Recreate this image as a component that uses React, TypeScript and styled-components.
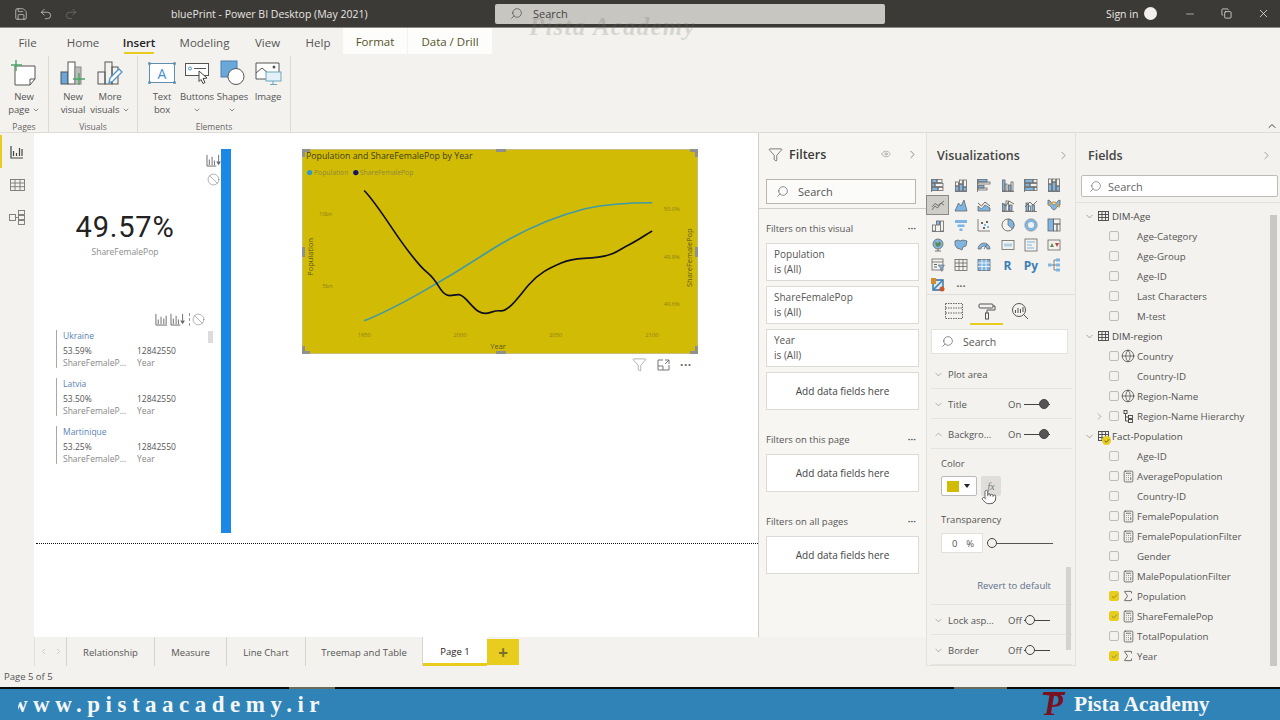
import React from 'react';
import styled, { createGlobalStyle } from 'styled-components';
import {
  Calculator,
  ChevronDown,
  ChevronLeft,
  ChevronRight,
  ChevronUp,
  Copy,
  Eye,
  Filter,
  Globe,
  Minus,
  Pointer,
  Redo2,
  Save,
  Search,
  Sigma,
  Undo2,
  X,
  Ban,
  Check,
} from 'lucide-react';

const INK = '#666';
const BLUE = '#7fb5e2';

const GlobalStyle = createGlobalStyle`
  html, body { margin: 0; padding: 0; background: #f3f2ee; }
  * { box-sizing: border-box; }
  body { font-family: "Open Sans", "Liberation Sans", sans-serif; color: #444; }
`;

const Solid = (x: number, y: number, w: number, h: number) => (
  <rect x={x} y={y} width={w} height={h} fill={BLUE} stroke={INK} strokeWidth={0.8} />
);
const Hollow = (x: number, y: number, w: number, h: number) => (
  <rect x={x} y={y} width={w} height={h} fill="none" stroke={INK} strokeWidth={0.8} />
);
const Base = <path d="M1 13.5H13" stroke={INK} strokeWidth={0.8} fill="none" />;
const Side = <path d="M.5 1V14" stroke={INK} strokeWidth={0.8} fill="none" />;

const vizIcons: React.ReactNode[] = [
  <>{Side}{Solid(1, 1.5, 5, 3)}{Hollow(6, 1.5, 5, 3)}{Solid(1, 5.5, 3, 3)}{Hollow(4, 5.5, 8, 3)}{Solid(1, 9.5, 6, 3)}{Hollow(7, 9.5, 5, 3)}</>,
  <>{Base}{Solid(1.5, 8, 3, 5)}{Hollow(1.5, 4, 3, 4)}{Solid(5.5, 6, 3, 7)}{Hollow(5.5, 2, 3, 4)}{Solid(9.5, 9, 3, 4)}{Hollow(9.5, 2, 3, 7)}</>,
  <>{Side}{Solid(1, 1.5, 9, 2.5)}{Hollow(1, 4, 12, 2)}{Solid(1, 7.5, 6, 2.5)}{Hollow(1, 10, 9, 2)}</>,
  <>{Base}{Solid(1.5, 2, 2.5, 11)}{Hollow(4, 6, 2, 7)}{Solid(7.5, 7, 2.5, 6)}{Hollow(10, 4, 2, 9)}</>,
  <>{Side}{Solid(1, 1.5, 8, 3)}{Hollow(9, 1.5, 4, 3)}{Solid(1, 5.5, 5, 3)}{Hollow(6, 5.5, 7, 3)}{Solid(1, 9.5, 9, 3)}{Hollow(10, 9.5, 3, 3)}</>,
  <>{Base}{Solid(1.5, 6, 3, 7)}{Hollow(1.5, 1, 3, 5)}{Solid(5.5, 4, 3, 9)}{Hollow(5.5, 1, 3, 3)}{Solid(9.5, 8, 3, 5)}{Hollow(9.5, 1, 3, 7)}</>,
  <path d="M1 12 4 8l2.5 2L10 5l3 2M1 9 4 5.5l3 2L13 3" fill="none" stroke={INK} strokeWidth={0.9} />,
  <><path d="M1 13 4.5 5 7 8l3-6 3 11Z" fill={BLUE} stroke={INK} strokeWidth={0.8} /></>,
  <><path d="M1 5l3.5 3L8 4l5 4" fill="none" stroke={INK} strokeWidth={1} /><path d="M1 8l3.5 3L8 7l5 3v3H1Z" fill={BLUE} stroke={INK} strokeWidth={0.8} /></>,
  <>{Base}{Solid(1.5, 6, 2.5, 7)}{Hollow(5, 3, 2.5, 10)}{Solid(8.5, 7, 2.5, 6)}<path d="M1 5l4 3 3-5 5 3" fill="none" stroke={INK} strokeWidth={0.9} /></>,
  <>{Base}{Solid(2, 5, 2.5, 8)}{Hollow(4.5, 8, 2, 5)}{Solid(8, 7, 2.5, 6)}<path d="M1 9l5-5 3 3 4-4" fill="none" stroke={INK} strokeWidth={0.9} /></>,
  <><path d="M1 2c3 0 4 5 6 5s3-5 6-5v5c-3 0-4 5-6 5s-3-5-6-5Z" fill={BLUE} stroke={INK} strokeWidth={0.8} /><path d="M1 7c3 0 4-3 6-3s3 4 6 5" fill="none" stroke="#c9a14a" strokeWidth={1.4} /></>,
  <>{Base}{Hollow(1.5, 7, 3, 6)}{Solid(5.5, 3, 3, 4)}{Hollow(9.5, 3, 3, 10)}</>,
  <path d="M1 2h12v3H1ZM3.5 6.5h7V9h-7ZM5.5 10.5h3V13h-3Z" fill={BLUE} stroke="none" />,
  <><path d="M1 1v12h12" fill="none" stroke={INK} strokeWidth={0.8} /><g fill={INK}><rect x="4" y="4" width="2" height="2" /><rect x="9" y="3" width="2" height="2" /><rect x="6" y="9" width="2" height="2" /></g><g fill={BLUE}><rect x="7" y="6" width="2" height="2" /><rect x="10" y="8" width="2" height="2" /></g></>,
  <><circle cx="7" cy="7" r="6" fill="none" stroke={INK} strokeWidth={0.9} /><path d="M7 7V1a6 6 0 0 1 4.5 10Z" fill={BLUE} stroke={INK} strokeWidth={0.7} /></>,
  <><circle cx="7" cy="7" r="4.5" fill="none" stroke={BLUE} strokeWidth={3} /><circle cx="7" cy="7" r="6.2" fill="none" stroke={INK} strokeWidth={0.5} /></>,
  <>{Solid(1, 1, 5.5, 12)}{Hollow(6.5, 1, 6.5, 5)}{Hollow(6.5, 6, 3.5, 7)}{Hollow(10, 6, 3, 7)}</>,
  <><circle cx="7" cy="6" r="5" fill={BLUE} stroke={INK} strokeWidth={0.8} /><path d="M4 4l3 1 2-2 1 4-3 2-2-1Z" fill="#5d8a4e" /><path d="M4 13h6M7 11v2" stroke={INK} strokeWidth={0.9} /></>,
  <path d="M1 3l3-1 2 1 3-1 4 1-1 5-3 1-1 3-2-1-3-1-2-3Z" fill={BLUE} stroke={INK} strokeWidth={0.8} />,
  <><path d="M1 11a6 6 0 0 1 12 0h-3a3 3 0 0 0-6 0Z" fill={BLUE} stroke={INK} strokeWidth={0.7} /><path d="M7 11l3-5" stroke={INK} strokeWidth={0.9} /></>,
  <>{Hollow(1, 2.5, 12, 9)}<path d="M3 5.5h8v3H3Z" fill={BLUE} opacity={0.6} /></>,
  <>{Hollow(1, 1, 12, 12)}<path d="M3 4h8M3 7h5M3 10h7" stroke={BLUE} strokeWidth={1.1} /></>,
  <>{Hollow(1, 2, 12, 10)}<path d="M3 9l2-4 2 4Z" fill="#5d8a4e" /><path d="M8 5h4l-2 4Z" fill="#b8433c" /></>,
  <>{Hollow(1, 1, 11, 11)}<path d="M1 4h11" stroke={INK} strokeWidth={0.8} /><path d="M3 6.5h3M3 9h3" stroke={INK} /><path d="M7 7h6.5l-2.5 3v3.5L9.5 12v-2Z" fill={BLUE} stroke={INK} strokeWidth={0.6} /></>,
  <>{Hollow(1, 1.5, 12, 11)}<path d="M1 5h12M1 8.5h12M5 1.5v11M9 1.5v11" stroke={INK} strokeWidth={0.8} /></>,
  <>{Solid(1, 1.5, 12, 11)}<path d="M1 5h12M1 8.5h12M5 1.5v11M9 1.5v11" stroke="#fff" strokeWidth={0.8} /></>,
  'R',
  'Py',
  <><path d="M4 7h3M7 2v10M7 2h2M7 7h2M7 12h2" stroke={INK} strokeWidth={0.8} fill="none" /><path d="M1 5.5h3.5v3H1ZM9 .5h4v3H9ZM9 5.5h4v3H9ZM9 10.5h4v3H9Z" fill={BLUE} /></>,
  <><path d="M2 2h10v10H2Z" fill="#dbe7f0" stroke="#2f6f9f" strokeWidth={1.4} /><path d="M3 11 11 3" stroke="#3a7fb5" strokeWidth={1.6} /><rect x="0" y="0" width="5" height="6" fill="#d68b2d" /><circle cx="11" cy="11" r="2.5" fill="#c9562d" /></>,
];

const PATH_BLUE = 'M205 543C290 510 440 425 570 340C680 268 780 228 870 205C950 188 1020 187 1072 187';
const PATH_DARK =
  'M205 150C230 175 260 220 290 265S350 350 375 378S405 398 430 440S470 462 490 464S525 500 550 515S590 510 615 513S670 470 700 435S760 385 800 368S860 358 910 351S970 330 1000 315S1050 285 1072 272';

const SearchIcon = () => (
  <FlippedIcon>
    <Search size={13} strokeWidth={1.2} />
  </FlippedIcon>
);

const CanvasGlyphs = {
  bars: (
    <svg width="13" height="13" viewBox="0 0 14 14" fill="none" stroke="#666" strokeWidth="1">
      <path d="M1 1v12h12M3.5 12V7M6.5 12V4M9.5 12V6M12 12V3" />
    </svg>
  ),
  drill: (
    <svg width="15" height="13" viewBox="0 0 16 14" fill="none" stroke="#666" strokeWidth="1">
      <path d="M1 1v12h10M3.5 12V6M6.5 12V3M9 12V7" />
      <path d="M11 8h5l-2.5 4Z" fill="#666" stroke="none" />
      <path d="M13.5 1v7" />
    </svg>
  ),
};

const HierarchyGlyph = () => (
  <svg width="11" height="13" viewBox="0 0 11 13" fill="none" stroke="#444" strokeWidth="0.9">
    <rect x="1" y=".5" width="3" height="3" />
    <path d="M2.5 3.5V11M2.5 7h3M2.5 11h3" />
    <rect x="5.5" y="5.5" width="4" height="3" />
    <rect x="5.5" y="9.5" width="4" height="3" />
  </svg>
);

type FieldKind = 'none' | 'globe' | 'calc' | 'sigma' | 'tree';
const fieldSections: { name: string; badge?: boolean; fields: [string, FieldKind, boolean?][] }[] = [
  { name: 'DIM-Age', fields: [['Age-Category', 'none'], ['Age-Group', 'none'], ['Age-ID', 'none'], ['Last Characters', 'none'], ['M-test', 'none']] },
  { name: 'DIM-region', fields: [['Country', 'globe'], ['Country-ID', 'none'], ['Region-Name', 'globe'], ['Region-Name Hierarchy', 'tree']] },
  {
    name: 'Fact-Population',
    badge: true,
    fields: [
      ['Age-ID', 'none'],
      ['AveragePopulation', 'calc'],
      ['Country-ID', 'none'],
      ['FemalePopulation', 'calc'],
      ['FemalePopulationFilter', 'calc'],
      ['Gender', 'none'],
      ['MalePopulationFilter', 'calc'],
      ['Population', 'sigma', true],
      ['ShareFemalePop', 'calc', true],
      ['TotalPopulation', 'calc'],
      ['Year', 'sigma', true],
    ],
  },
];

const fieldIcon = (kind: FieldKind) => {
  if (kind === 'globe') return <Globe size={14} strokeWidth={1.1} color="#333" />;
  if (kind === 'calc') return <Calculator size={13} strokeWidth={1.3} color="#444" />;
  if (kind === 'sigma') return <Sigma size={14} strokeWidth={1.2} color="#333" />;
  if (kind === 'tree') return <HierarchyGlyph />;
  return null;
};

const TableGlyph = () => (
  <svg width="11" height="10" viewBox="0 0 11 10" fill="none" stroke="#444" strokeWidth="0.9">
    <rect x=".5" y=".5" width="10" height="9" />
    <path d="M.5 3.5h10M.5 6.5h10M4 .5v9M7.5 .5v9" />
  </svg>
);

const Toggle = ({ on }: { on: boolean }) => (
  <ToggleWrap>
    <ToggleLabel>{on ? 'On' : 'Off'}</ToggleLabel>
    <ToggleTrack>
      <ToggleKnob $on={on} />
    </ToggleTrack>
  </ToggleWrap>
);

const listItems = [
  ['Ukraine', '53.59%'],
  ['Latvia', '53.50%'],
  ['Martinique', '53.25%'],
];

const App = () => (
  <>
    <GlobalStyle />
    <Page>
      <TitleBar>
        <QuickIcons>
          <Save size={14} strokeWidth={1.2} color="#ddd" />
          <Undo2 size={14} strokeWidth={1.2} color="#ddd" />
          <Redo2 size={14} strokeWidth={1.2} color="#777" />
        </QuickIcons>
        <WindowTitle>bluePrint - Power BI Desktop (May 2021)</WindowTitle>
        <TopSearch>
          <SearchIcon />
          <span>Search</span>
        </TopSearch>
        <SignIn>Sign in</SignIn>
        <Avatar />
        <WindowButtons>
          <Minus size={12} strokeWidth={1.2} />
          <Copy size={11} strokeWidth={1.6} />
          <X size={13} strokeWidth={1.4} />
        </WindowButtons>
      </TitleBar>
      <Watermark>Pista Academy</Watermark>

      <TabBar>
        <MenuTab $w={55}>File</MenuTab>
        <MenuTab $w={56}>Home</MenuTab>
        <MenuTab $w={56} $active>Insert</MenuTab>
        <MenuTab $w={75}>Modeling</MenuTab>
        <MenuTab $w={51}>View</MenuTab>
        <MenuTab $w={50}>Help</MenuTab>
        <ContextTab $w={64}>Format</ContextTab>
        <ContextTab $w={84}>Data / Drill</ContextTab>
      </TabBar>

      <Ribbon>
        <RibbonGroup $w={49}>
          <RibbonButtons $pad={0}>
            <RibbonButton $w={48}>
              <svg width="26" height="26" viewBox="0 0 26 26" fill="none">
                <path d="M4 6h20v13l-5 6H4Z" stroke="#555" fill="#fff" />
                <path d="M24 19h-5v6" stroke="#555" />
                <path d="M5 0v11M0 5h11" stroke="#4aa564" strokeWidth="1.4" />
              </svg>
              <ButtonLabel>New<br />page <ChevronDown size={8} /></ButtonLabel>
            </RibbonButton>
          </RibbonButtons>
          <GroupName>Pages</GroupName>
        </RibbonGroup>
        <RibbonGroup $w={89}>
          <RibbonButtons $pad={5.5}>
            <RibbonButton $w={37}>
              <svg width="26" height="26" viewBox="0 0 26 26" fill="none">
                <rect x="1" y="12" width="7" height="12" fill="#6aa8dc" stroke="#555" />
                <rect x="8" y="2" width="7" height="22" fill="#fff" stroke="#555" />
                <rect x="15" y="7" width="6" height="17" fill="#bbb" stroke="#888" />
                <path d="M19 13v12M13 19h12" stroke="#4aa564" strokeWidth="1.4" />
              </svg>
              <ButtonLabel>New<br />visual</ButtonLabel>
            </RibbonButton>
            <RibbonButton $w={37}>
              <svg width="26" height="26" viewBox="0 0 26 26" fill="none">
                <rect x="1" y="12" width="7" height="12" stroke="#555" />
                <rect x="8" y="2" width="7" height="22" stroke="#555" />
                <rect x="15" y="7" width="6" height="17" stroke="#555" />
                <path d="M12 23l1-5L22 9l3 3-9 9Z" fill="#fff" stroke="#4d93c9" strokeWidth="1.3" />
              </svg>
              <ButtonLabel>More<br />visuals <ChevronDown size={8} /></ButtonLabel>
            </RibbonButton>
          </RibbonButtons>
          <GroupName>Visuals</GroupName>
        </RibbonGroup>
        <RibbonGroup $w={153}>
          <RibbonButtons $pad={6.5}>
            <RibbonButton $w={35}>
              <svg width="28" height="26" viewBox="0 0 28 26" fill="none">
                <rect x="1.5" y="3.5" width="25" height="19" fill="#fff" stroke="#5f8fae" />
                <g fill="#5f8fae">
                  <circle cx="1.5" cy="3.5" r="1.5" /><circle cx="26.5" cy="3.5" r="1.5" />
                  <circle cx="1.5" cy="22.5" r="1.5" /><circle cx="26.5" cy="22.5" r="1.5" />
                </g>
                <text x="14" y="19" fontSize="14" textAnchor="middle" fill="#3f8fd2" fontFamily="Open Sans">A</text>
              </svg>
              <ButtonLabel>Text<br />box</ButtonLabel>
            </RibbonButton>
            <RibbonButton $w={35}>
              <svg width="26" height="26" viewBox="0 0 26 26" fill="none">
                <rect x="1.5" y="3.5" width="23" height="12" fill="#fff" stroke="#555" />
                <circle cx="6" cy="8.5" r="1.5" stroke="#4d93c9" />
                <path d="M10 8.5h12" stroke="#555" />
                <path d="M15 11l8 7-4 .5 2 4-2 1-2-4-2 2Z" fill="#fff" stroke="#444" />
              </svg>
              <ButtonLabel>Buttons<br /><ChevronDown size={8} /></ButtonLabel>
            </RibbonButton>
            <RibbonButton $w={36}>
              <svg width="26" height="26" viewBox="0 0 26 26" fill="none">
                <rect x="1" y="1" width="16" height="16" fill="#6aa8dc" stroke="#4d7ea8" />
                <circle cx="16" cy="16.5" r="8" fill="#fff" stroke="#555" />
              </svg>
              <ButtonLabel>Shapes<br /><ChevronDown size={8} /></ButtonLabel>
            </RibbonButton>
            <RibbonButton $w={35}>
              <svg width="27" height="26" viewBox="0 0 27 26" fill="none">
                <path d="M11 19H1V3h23v9" stroke="#555" fill="#fff" />
                <path d="M1 13l6-5 6 5" stroke="#555" />
                <circle cx="19" cy="7" r="1.5" fill="#555" />
                <rect x="11" y="12" width="15" height="9" fill="#e4f0f7" stroke="#6aa8bc" />
                <path d="M18 21v3M15 24.5h7" stroke="#6aa8bc" />
              </svg>
              <ButtonLabel>Image</ButtonLabel>
            </RibbonButton>
          </RibbonButtons>
          <GroupName>Elements</GroupName>
        </RibbonGroup>
        <RibbonCollapse>
          <ChevronUp size={12} />
        </RibbonCollapse>
      </Ribbon>

      <Body>
        <CenterColumn>
          <CenterTop>
            <Rail>
              <RailItem $active>
                <svg width="14" height="14" viewBox="0 0 14 14" fill="none" stroke="#444">
                  <path d="M1 1v12h12M3.5 11V6M6.5 11V8M9.5 11V3M12 11V4" strokeWidth="1.2" />
                </svg>
              </RailItem>
              <RailItem>
                <svg width="15" height="14" viewBox="0 0 15 14" fill="none" stroke="#777" strokeWidth="0.9">
                  <rect x=".5" y="1.5" width="14" height="11" />
                  <path d="M.5 5h14M.5 8.7h14M5 1.5v11M10 1.5v11" />
                </svg>
              </RailItem>
              <RailItem>
                <svg width="16" height="15" viewBox="0 0 16 15" fill="none" stroke="#777" strokeWidth="0.9">
                  <rect x=".5" y="4.5" width="6" height="6" />
                  <rect x="9.5" y=".5" width="6" height="4" />
                  <rect x="9.5" y="5.5" width="6" height="4" />
                  <rect x="9.5" y="10.5" width="6" height="4" />
                  <path d="M6.5 7.5h3" />
                </svg>
              </RailItem>
            </Rail>

            <ReportCanvas>
              <KpiCard>
                <KpiValue>49.57%</KpiValue>
                <KpiLabel>ShareFemalePop</KpiLabel>
              </KpiCard>
              <KpiActions>
                {CanvasGlyphs.drill}
                <Ban size={13} strokeWidth={0.9} color="#666" />
              </KpiActions>
              <BlueBar />
              <ListActions>
                {CanvasGlyphs.bars}
                {CanvasGlyphs.drill}
                <ActionDots />
                <Ban size={13} strokeWidth={0.9} color="#666" />
              </ListActions>
              <MultiCard>
                {listItems.map(([country, share]) => (
                  <ListEntry key={country}>
                    <EntryTitle>{country}</EntryTitle>
                    <EntryGrid>
                      <EntryValue>{share}</EntryValue>
                      <EntryValue>12842550</EntryValue>
                      <EntryCaption>ShareFemaleP...</EntryCaption>
                      <EntryCaption>Year</EntryCaption>
                    </EntryGrid>
                  </ListEntry>
                ))}
                <ListThumb />
              </MultiCard>
              <PageRule />

              <ChartVisual>
                <svg width="100%" height="100%" viewBox="21 28 1186 612" preserveAspectRatio="none">
                  <g fontFamily="Open Sans, sans-serif">
                    <text x="30" y="54" fontSize="26.5" fill="#40401c">Population and ShareFemalePop by Year</text>
                    <circle cx="41" cy="96" r="8" fill="#2f9bc4" />
                    <text x="54" y="103" fontSize="20.5" fill="#8a8a3a">Population</text>
                    <circle cx="180" cy="96" r="8" fill="#151468" />
                    <text x="192" y="103" fontSize="20.5" fill="#8a8a3a">ShareFemalePop</text>
                    <g fontSize="17" fill="#8a8118">
                      <text x="69" y="226">10bn</text>
                      <text x="80" y="443">5bn</text>
                      <text x="1107" y="212">50.0%</text>
                      <text x="1107" y="357">49.8%</text>
                      <text x="1107" y="499">49.6%</text>
                      <text x="186" y="591">1950</text>
                      <text x="474" y="591">2000</text>
                      <text x="762" y="591">2050</text>
                      <text x="1052" y="591">2100</text>
                    </g>
                    <g fontSize="22.5" fill="#5a5620">
                      <text x="585" y="627">Year</text>
                      <text transform="translate(51 407) rotate(-90)">Population</text>
                      <text transform="translate(1192 441) rotate(-90)">ShareFemalePop</text>
                    </g>
                  </g>
                  <path d={PATH_BLUE} fill="none" stroke="#3f9aa8" strokeWidth="5" />
                  <path d={PATH_DARK} fill="none" stroke="#0e0e24" strokeWidth="5" />
                </svg>
                <Handle $pos="tl" />
                <Handle $pos="tr" />
                <Handle $pos="bl" />
                <Handle $pos="br" />
                <MidHandle $pos="top" />
                <MidHandle $pos="bottom" />
                <MidHandle $pos="left" />
                <MidHandle $pos="right" />
              </ChartVisual>
              <ChartActions>
                <Filter size={15} strokeWidth={0.9} color="#777" />
                <svg width="13" height="12" viewBox="0 0 13 12" fill="none" stroke="#777">
                  <path d="M6 1H1v10h11V6M1 7h5v4M8 1h4v4M12 1 8 5" />
                </svg>
                <DotsLabel>···</DotsLabel>
              </ChartActions>
            </ReportCanvas>

            <FiltersPanel>
              <FiltersHead>
                <Filter size={15} strokeWidth={1.1} />
                <FiltersTitle>Filters</FiltersTitle>
                <Eye size={10} strokeWidth={1} color="#666" />
                <HeadChevron>
                  <ChevronRight size={13} strokeWidth={1.1} />
                </HeadChevron>
              </FiltersHead>
              <FiltersSearch>
                <SearchIcon />
                <span>Search</span>
              </FiltersSearch>
              <FiltersBody>
                <FilterHeading>Filters on this visual<span>···</span></FilterHeading>
                <FilterCard>Population<br />is (All)</FilterCard>
                <FilterCard>ShareFemalePop<br />is (All)</FilterCard>
                <FilterCard>Year<br />is (All)</FilterCard>
                <DropCard>Add data fields here</DropCard>
                <FilterHeading>Filters on this page<span>···</span></FilterHeading>
                <DropCard>Add data fields here</DropCard>
                <FilterHeading>Filters on all pages<span>···</span></FilterHeading>
                <DropCard>Add data fields here</DropCard>
              </FiltersBody>
            </FiltersPanel>
          </CenterTop>

          <PageTabs>
            <TabNav>
              <ChevronLeft size={9} color="#bbb" />
              <ChevronRight size={9} color="#bbb" />
            </TabNav>
            <PageTab $w={88}>Relationship</PageTab>
            <PageTab $w={72}>Measure</PageTab>
            <PageTab $w={79}>Line Chart</PageTab>
            <PageTab $w={117}>Treemap and Table</PageTab>
            <PageTab $w={64} $active>Page 1</PageTab>
            <AddPage>+</AddPage>
          </PageTabs>
        </CenterColumn>

        <VizPanel>
          <PanelHead>
            <PanelTitle>Visualizations</PanelTitle>
            <ChevronRight size={13} strokeWidth={1} />
          </PanelHead>
          <VizGrid>
            {vizIcons.map((icon, i) => (
              <VizCell key={i} $selected={i === 6}>
                {typeof icon === 'string' ? (
                  <ScriptGlyph>{icon}</ScriptGlyph>
                ) : (
                  <svg width="14" height="14" viewBox="0 0 14 14">{icon}</svg>
                )}
              </VizCell>
            ))}
            <VizCell><MoreDots>···</MoreDots></VizCell>
          </VizGrid>
          <PaneTabs>
            <PaneTab>
              <svg width="18" height="16" viewBox="0 0 18 16" fill="none" stroke="#666" strokeDasharray="1.5 1">
                <rect x=".5" y=".5" width="17" height="15" />
                <path d="M.5 5h17M.5 10h17" />
              </svg>
            </PaneTab>
            <PaneTab $active>
              <svg width="18" height="17" viewBox="0 0 18 17" fill="none" stroke="#555">
                <rect x="1" y="1" width="14" height="4" rx="1" />
                <path d="M15 3h2v4H9v3" />
                <rect x="7.5" y="10" width="3" height="6" />
              </svg>
            </PaneTab>
            <PaneTab>
              <svg width="18" height="18" viewBox="0 0 18 18" fill="none" stroke="#555">
                <circle cx="8" cy="8" r="6.5" />
                <path d="M12.5 12.5 17 17M4.5 11V8M7 11V6M9.5 11V7M12 10V5" />
              </svg>
            </PaneTab>
          </PaneTabs>
          <VizSearch>
            <SearchIcon />
            <span>Search</span>
          </VizSearch>
          <FormatList>
            <FormatRow>
              <ChevronDown size={11} strokeWidth={1} />
              <FormatName>Plot area</FormatName>
            </FormatRow>
            <FormatRow>
              <ChevronDown size={11} strokeWidth={1} />
              <FormatName>Title</FormatName>
              <Toggle on />
            </FormatRow>
            <FormatRow>
              <ChevronUp size={11} strokeWidth={1} />
              <FormatName>Backgro...</FormatName>
              <Toggle on />
            </FormatRow>
            <FormatBody>
              <FormatLabel>Color</FormatLabel>
              <ColorRow>
                <ColorPicker>
                  <Swatch />
                  <Caret />
                </ColorPicker>
                <FxButton>fx</FxButton>
                <HandCursor>
                  <Pointer size={16} strokeWidth={1.1} fill="#fff" color="#333" />
                </HandCursor>
              </ColorRow>
              <TransparencyLabel>Transparency</TransparencyLabel>
              <SliderRow>
                <PercentBox><span>0</span><span>%</span></PercentBox>
                <SliderTrack><SliderKnob /></SliderTrack>
              </SliderRow>
              <RevertLink>Revert to default</RevertLink>
            </FormatBody>
            <FormatRow>
              <ChevronDown size={11} strokeWidth={1} />
              <FormatName>Lock asp...</FormatName>
              <Toggle on={false} />
            </FormatRow>
            <FormatRow>
              <ChevronDown size={11} strokeWidth={1} />
              <FormatName>Border</FormatName>
              <Toggle on={false} />
            </FormatRow>
          </FormatList>
          <VizScroll />
        </VizPanel>

        <FieldsPanel>
          <FieldsHead>
            <PanelTitle>Fields</PanelTitle>
            <ChevronRight size={13} strokeWidth={1} />
          </FieldsHead>
          <FieldsSearch>
            <SearchIcon />
            <span>Search</span>
          </FieldsSearch>
          <FieldsBody>
            <FieldTree>
              {fieldSections.map(section => (
                <React.Fragment key={section.name}>
                  <TableRow>
                    <ChevronDown size={11} strokeWidth={1} />
                    <TableIconSlot>
                      <TableGlyph />
                      {section.badge && (
                        <WarnBadge><Check size={6} strokeWidth={3} /></WarnBadge>
                      )}
                    </TableIconSlot>
                    <span>{section.name}</span>
                  </TableRow>
                  {section.fields.map(([name, kind, checked]) => (
                    <FieldRow key={name}>
                      <ExpandSlot>
                        {kind === 'tree' && <ChevronRight size={11} strokeWidth={1} />}
                      </ExpandSlot>
                      <CheckBox $checked={!!checked}>
                        {checked && <Check size={7} strokeWidth={2} />}
                      </CheckBox>
                      <KindSlot>{fieldIcon(kind)}</KindSlot>
                      <span>{name}</span>
                    </FieldRow>
                  ))}
                </React.Fragment>
              ))}
            </FieldTree>
            <FieldsScroll />
          </FieldsBody>
        </FieldsPanel>
      </Body>

      <StatusBar>Page 5 of 5</StatusBar>
      <PlayerLine>
        <PlayerMark $w={46} $left={289} />
        <PlayerMark $w={53} $left={954} />
      </PlayerLine>

      <BrandBar>
        <SiteClip><SiteUrl>www.pistaacademy.ir</SiteUrl></SiteClip>
        <BrandLogo>P</BrandLogo>
        <BrandName>Pista Academy</BrandName>
      </BrandBar>
    </Page>
  </>
);

const Page = styled.div`
  position: relative;
  width: 1280px;
  height: 720px;
  overflow: hidden;
  display: flex;
  flex-direction: column;
  background: #f3f2ee;
`;

const TitleBar = styled.div`
  height: 28px;
  flex: none;
  display: flex;
  align-items: center;
  background: #3b3a36;
  color: #e8e6e2;
  font-size: 10.5px;
  border-bottom: 1px solid #8c8a84;
`;

const QuickIcons = styled.div`
  display: flex;
  align-items: center;
  gap: 11px;
  width: 171px;
  padding-left: 14px;
`;

const WindowTitle = styled.div`
  width: 324px;
`;

const TopSearch = styled.div`
  width: 390px;
  height: 20px;
  display: flex;
  align-items: center;
  gap: 10px;
  padding-left: 15px;
  background: #c8c6c0;
  color: #444;
  font-size: 11px;
  border-radius: 2px;
`;

const FlippedIcon = styled.span`
  display: inline-flex;
  transform: scaleX(-1);
`;

const SignIn = styled.div`
  margin-left: 221px;
  width: 38px;
`;

const Avatar = styled.div`
  width: 13px;
  height: 13px;
  border-radius: 50%;
  background: #f1f0ec;
`;

const WindowButtons = styled.div`
  display: flex;
  align-items: center;
  gap: 25px;
  margin-left: 27px;
  color: #eee;
`;

const Watermark = styled.div`
  position: absolute;
  left: 529px;
  top: 13px;
  font: italic bold 25px "Liberation Serif", serif;
  letter-spacing: 1.2px;
  color: rgba(110, 110, 105, 0.22);
  pointer-events: none;
`;

const TabBar = styled.div`
  height: 28px;
  flex: none;
  display: flex;
  font-size: 11.5px;
  background: #f3f2ee;
`;

const MenuTab = styled.div<{ $w: number; $active?: boolean }>`
  position: relative;
  width: ${p => p.$w}px;
  display: flex;
  align-items: center;
  justify-content: center;
  color: ${p => (p.$active ? '#222' : '#555')};
  font-weight: ${p => (p.$active ? 600 : 400)};

  &::after {
    content: '';
    display: ${p => (p.$active ? 'block' : 'none')};
    position: absolute;
    left: 13px;
    right: 13px;
    bottom: 2px;
    height: 2px;
    background: #e8cd1e;
  }
`;

const ContextTab = styled.div<{ $w: number }>`
  width: ${p => p.$w}px;
  height: 26px;
  margin-right: 1px;
  display: flex;
  align-items: center;
  justify-content: center;
  background: #fdfdfb;
  color: #55532a;
  font-weight: 500;
`;

const Ribbon = styled.div`
  position: relative;
  height: 77px;
  flex: none;
  display: flex;
  background: #f3f2ee;
  border-bottom: 1px solid #dedcd6;
`;

const RibbonGroup = styled.div<{ $w: number }>`
  width: ${p => p.$w}px;
  display: flex;
  flex-direction: column;
  align-items: center;
  border-right: 1px solid #dcdad4;
`;

const RibbonButtons = styled.div<{ $pad: number }>`
  display: flex;
  flex: 1;
  align-self: flex-start;
  padding: 4px 0 0 ${p => p.$pad}px;
`;

const RibbonButton = styled.div<{ $w: number }>`
  width: ${p => p.$w}px;
  display: flex;
  flex-direction: column;
  align-items: center;
  gap: 4px;
`;

const ButtonLabel = styled.div`
  font-size: 9.5px;
  line-height: 13px;
  letter-spacing: -0.1px;
  text-align: center;
  color: #555;
  white-space: nowrap;

  svg {
    vertical-align: middle;
  }
`;

const GroupName = styled.div`
  font-size: 8.5px;
  line-height: 11px;
  color: #666;
`;

const RibbonCollapse = styled.div`
  position: absolute;
  right: 2px;
  bottom: 0;
  display: flex;
  color: #444;
`;

const Body = styled.div`
  flex: none;
  height: 533px;
  display: flex;
`;

const CenterColumn = styled.div`
  width: 926px;
  display: flex;
  flex-direction: column;
`;

const CenterTop = styled.div`
  height: 504px;
  display: flex;
`;

const Rail = styled.div`
  width: 34px;
  display: flex;
  flex-direction: column;
  padding-top: 2px;
`;

const RailItem = styled.div<{ $active?: boolean }>`
  height: 33px;
  display: flex;
  align-items: center;
  justify-content: center;
  padding-right: 2px;
  border-left: 2px solid ${p => (p.$active ? '#e8cd1e' : 'transparent')};
`;

const ReportCanvas = styled.div`
  position: relative;
  width: 725px;
  background: #fff;
  border-right: 1px solid #cfcdc8;
`;

const KpiCard = styled.div`
  position: absolute;
  left: 26px;
  top: 77px;
  width: 130px;
  display: flex;
  flex-direction: column;
  align-items: center;
`;

const KpiValue = styled.div`
  font: 400 29px/35px Roboto, sans-serif;
  letter-spacing: 0.8px;
  color: #222;
`;

const KpiLabel = styled.div`
  font-size: 8.5px;
  line-height: 13px;
  color: #8c8c8c;
`;

const KpiActions = styled.div`
  position: absolute;
  left: 172px;
  top: 21px;
  display: flex;
  flex-direction: column;
  align-items: center;
  gap: 6px;
`;

const BlueBar = styled.div`
  position: absolute;
  left: 187px;
  top: 16px;
  width: 10px;
  height: 384px;
  background: #1b87e6;
`;

const ListActions = styled.div`
  position: absolute;
  left: 121px;
  top: 180px;
  display: flex;
  align-items: center;
  gap: 2px;
`;

const ActionDots = styled.span`
  width: 3px;
  height: 13px;
  border-right: 1px dashed #999;
`;

const MultiCard = styled.div`
  position: absolute;
  left: 22px;
  top: 197px;
  width: 157px;
  display: flex;
  flex-direction: column;
  gap: 10px;
`;

const ListThumb = styled.div`
  position: absolute;
  right: 0;
  top: 1px;
  width: 5px;
  height: 12px;
  background: #dcdcdc;
`;

const ListEntry = styled.div`
  height: 38px;
  padding-left: 6px;
  border-left: 1px solid #a8a8a8;
`;

const EntryTitle = styled.div`
  font-size: 8.5px;
  line-height: 12px;
  color: #5b83b4;
`;

const EntryGrid = styled.div`
  display: grid;
  grid-template-columns: 74px 1fr;
  margin-top: 3px;
  line-height: 11.5px;
`;

const EntryValue = styled.div`
  font-size: 8.5px;
  color: #555;
`;

const EntryCaption = styled.div`
  font-size: 8.5px;
  color: #888;
`;

const PageRule = styled.div`
  position: absolute;
  left: 2px;
  right: 0;
  top: 410px;
  border-top: 1px dotted #111;
`;

const ChartVisual = styled.div`
  position: absolute;
  left: 268px;
  top: 16px;
  width: 396px;
  height: 205px;
  background: #d2bb05;
  border: 1px solid #c4bd7c;

  svg {
    display: block;
  }
`;

const handleSides = {
  tl: 'left: -1px; top: -1px; border-left-width: 3px; border-top-width: 3px;',
  tr: 'right: -1px; top: -1px; border-right-width: 3px; border-top-width: 3px;',
  bl: 'left: -1px; bottom: -1px; border-left-width: 3px; border-bottom-width: 3px;',
  br: 'right: -1px; bottom: -1px; border-right-width: 3px; border-bottom-width: 3px;',
};

const Handle = styled.span<{ $pos: keyof typeof handleSides }>`
  position: absolute;
  width: 8px;
  height: 8px;
  border: 0 solid #8f8f8c;
  ${p => handleSides[p.$pos]}
`;

const midSides = {
  top: 'left: 193px; top: -1px; width: 10px; height: 3px;',
  bottom: 'left: 193px; bottom: -1px; width: 10px; height: 3px;',
  left: 'left: -1px; top: 97px; width: 3px; height: 10px;',
  right: 'right: -1px; top: 97px; width: 3px; height: 10px;',
};

const MidHandle = styled.span<{ $pos: keyof typeof midSides }>`
  position: absolute;
  background: #8f8f8c;
  ${p => midSides[p.$pos]}
`;

const ChartActions = styled.div`
  position: absolute;
  left: 598px;
  top: 223px;
  display: flex;
  align-items: center;
  gap: 10px;
`;

const DotsLabel = styled.span`
  font-size: 12px;
  font-weight: 700;
  color: #666;
  letter-spacing: 0.5px;
`;

const FiltersPanel = styled.div`
  width: 167px;
  display: flex;
  flex-direction: column;
  background: #f7f6f3;
`;

const FiltersHead = styled.div`
  height: 42px;
  display: flex;
  align-items: center;
  padding: 0 7px 0 9px;
  flex: none;
  color: #444;
`;

const HeadChevron = styled.span`
  display: flex;
  margin-left: 15px;
`;

const FiltersTitle = styled.div`
  flex: 1;
  margin-left: 6px;
  font-size: 12.5px;
  font-weight: 600;
  color: #3a3a3a;
`;

const FiltersSearch = styled.div`
  width: 150px;
  height: 25px;
  margin: 4px 0 4px 7px;
  display: flex;
  align-items: center;
  gap: 9px;
  padding-left: 9px;
  flex: none;
  font-size: 11px;
  color: #555;
  background: #fbfbf9;
  border: 1px solid #b5b5b1;
`;

const FiltersBody = styled.div`
  flex: 1;
  padding: 0 7px;
  border-top: 1px solid #cfcdc8;
  display: flex;
  flex-direction: column;
`;

const FilterHeading = styled.div`
  height: 34px;
  padding-top: 13px;
  display: flex;
  justify-content: space-between;
  font-size: 9.5px;
  line-height: 14px;
  color: #555;

  span {
    padding-right: 3px;
    font-weight: 700;
  }

  &:not(:first-child) {
    height: 44px;
    padding-top: 23px;
  }
`;

const FilterCard = styled.div`
  height: 38px;
  margin-bottom: 5px;
  padding: 3px 7px;
  font-size: 10px;
  line-height: 15px;
  color: #555;
  background: #fff;
  border: 1px solid #dadad6;
`;

const DropCard = styled.div`
  height: 38px;
  flex: none;
  display: flex;
  align-items: center;
  justify-content: center;
  font-size: 10px;
  color: #444;
  background: #fff;
  border: 1px solid #dadad6;
`;

const PageTabs = styled.div`
  flex: 1;
  display: flex;
  padding-left: 34px;
  font-size: 9.5px;
`;

const TabNav = styled.div`
  width: 33px;
  display: flex;
  align-items: center;
  justify-content: center;
  gap: 6px;
  border-left: 1px solid #e2e0da;
  border-right: 1px solid #d6d4ce;
`;

const PageTab = styled.div<{ $w: number; $active?: boolean }>`
  width: ${p => p.$w}px;
  display: flex;
  align-items: center;
  justify-content: center;
  padding-top: ${p => (p.$active ? '3px' : '1px')};
  color: ${p => (p.$active ? '#222' : '#555')};
  background: ${p => (p.$active ? '#fff' : 'transparent')};
  border-right: ${p => (p.$active ? 'none' : '1px solid #d6d4ce')};
  border-bottom: ${p => (p.$active ? '3px solid #e8cd1e' : 'none')};
`;

const AddPage = styled.div`
  width: 32px;
  height: 26px;
  margin-top: 2px;
  display: flex;
  align-items: center;
  justify-content: center;
  background: #e8cd1e;
  color: #77702a;
  font-size: 17px;
  font-weight: 700;
`;

const VizPanel = styled.div`
  position: relative;
  width: 150px;
  display: flex;
  flex-direction: column;
  border-left: 1px solid #e3e1db;
  border-right: 1px solid #e3e1db;
  border-bottom: 1px solid #e3e1db;
`;

const PanelHead = styled.div`
  height: 42px;
  flex: none;
  display: flex;
  align-items: center;
  justify-content: space-between;
  padding: 2px 5px 0 10px;
  color: #555;
`;

const FieldsHead = styled(PanelHead)`
  padding-left: 12px;
  padding-right: 7px;
`;

const PanelTitle = styled.div`
  font-size: 12.5px;
  font-weight: 600;
  color: #444;
`;

const VizGrid = styled.div`
  display: grid;
  grid-template-columns: repeat(6, 23.3px);
  grid-auto-rows: 20px;
  height: 120px;
  flex: none;
  margin-left: -1px;
  border-bottom: 1px solid #e0ded8;
`;

const VizCell = styled.div<{ $selected?: boolean }>`
  display: flex;
  align-items: center;
  justify-content: center;
  background: ${p => (p.$selected ? '#cfcdc8' : 'transparent')};
  outline: ${p => (p.$selected ? '1px solid #8a8a86' : 'none')};
  outline-offset: -1px;
`;

const ScriptGlyph = styled.span`
  font-size: 12px;
  font-weight: 700;
  color: #3d7fb5;
`;

const MoreDots = styled.span`
  font-size: 11px;
  font-weight: 700;
  color: #666;
`;

const PaneTabs = styled.div`
  height: 34px;
  flex: none;
  display: flex;
  padding-left: 10px;
`;

const PaneTab = styled.div<{ $active?: boolean }>`
  width: 33px;
  display: flex;
  align-items: center;
  justify-content: center;
  padding-top: 4px;
  margin-bottom: 4px;
  border-bottom: 2px solid ${p => (p.$active ? '#e8cd1e' : 'transparent')};
`;

const VizSearch = styled.div`
  width: 137px;
  height: 25px;
  margin-left: 4px;
  flex: none;
  display: flex;
  align-items: center;
  gap: 9px;
  padding-left: 9px;
  font-size: 10.5px;
  color: #555;
  background: #fff;
  border: 1px solid #e4e2dd;
`;

const FormatList = styled.div`
  margin: 5px 0 0 4px;
  width: 141px;
  display: flex;
  flex-direction: column;
`;

const FormatRow = styled.div`
  height: 30px;
  flex: none;
  display: flex;
  align-items: center;
  gap: 4px;
  padding: 1px 0 0 2px;
  color: #666;
  border-bottom: 1px solid #e6e4de;
`;

const FormatName = styled.div`
  width: 56px;
  font-size: 9.5px;
  color: #555;
  white-space: nowrap;
`;

const ToggleWrap = styled.div`
  display: flex;
  align-items: center;
  gap: 1px;
`;

const ToggleLabel = styled.div`
  width: 15px;
  font-size: 9.5px;
  color: #555;
`;

const ToggleTrack = styled.div`
  position: relative;
  width: 26px;
  border-top: 1px solid #444;
`;

const ToggleKnob = styled.span<{ $on: boolean }>`
  position: absolute;
  top: -5.5px;
  left: ${p => (p.$on ? '15px' : '1px')};
  width: 10px;
  height: 10px;
  border-radius: 50%;
  background: ${p => (p.$on ? '#555' : '#f3f2ee')};
  border: 1px solid #444;
`;

const FormatBody = styled.div`
  height: 156px;
  flex: none;
  padding: 8px 0 0 10px;
  border-bottom: 1px solid #e6e4de;
  display: flex;
  flex-direction: column;
`;

const FormatLabel = styled.div`
  font-size: 9.5px;
  line-height: 13px;
  color: #555;
`;

const ColorRow = styled.div`
  position: relative;
  margin-top: 6px;
  display: flex;
  gap: 4px;
`;

const ColorPicker = styled.div`
  width: 36px;
  height: 20px;
  display: flex;
  align-items: center;
  gap: 5px;
  padding-left: 5px;
  background: #fff;
  border: 1px solid #bbb;
  border-radius: 2px;
`;

const Swatch = styled.span`
  width: 12px;
  height: 11px;
  background: #d2bb05;
`;

const Caret = styled.span`
  width: 0;
  height: 0;
  border: 3px solid transparent;
  border-top: 4px solid #222;
  border-bottom: 0;
`;

const FxButton = styled.div`
  width: 20px;
  height: 20px;
  display: flex;
  align-items: center;
  justify-content: center;
  background: #dfdeda;
  color: #777;
  font: italic 10px "Liberation Serif", serif;
  border-radius: 2px;
`;

const HandCursor = styled.span`
  position: absolute;
  left: 40px;
  top: 12px;
`;

const TransparencyLabel = styled(FormatLabel)`
  margin-top: 17px;
`;

const SliderRow = styled.div`
  margin-top: 7px;
  display: flex;
  align-items: center;
  gap: 9px;
`;

const PercentBox = styled.div`
  width: 42px;
  height: 20px;
  display: flex;
  align-items: center;
  justify-content: space-between;
  padding: 0 8px 0 10px;
  font-size: 9.5px;
  color: #555;
  background: #fff;
  border: 1px solid #e2e0db;
`;

const SliderTrack = styled.div`
  position: relative;
  width: 61px;
  border-top: 1px solid #555;
`;

const SliderKnob = styled.span`
  position: absolute;
  left: -5px;
  top: -5.5px;
  width: 10px;
  height: 10px;
  border-radius: 50%;
  background: #f3f2ee;
  border: 1px solid #444;
`;

const RevertLink = styled.div`
  margin-top: 26px;
  padding-right: 21px;
  text-align: right;
  font-size: 9.5px;
  color: #5d718c;
`;

const VizScroll = styled.div`
  position: absolute;
  right: 4px;
  top: 434px;
  width: 5px;
  height: 83px;
  background: #d4d3cf;
`;

const FieldsPanel = styled.div`
  width: 204px;
  display: flex;
  flex-direction: column;
`;

const FieldsSearch = styled.div`
  width: 197px;
  height: 22px;
  margin-left: 5px;
  flex: none;
  display: flex;
  align-items: center;
  gap: 6px;
  padding-left: 7px;
  font-size: 11px;
  color: #666;
  background: #fff;
  border: 1px solid #bdbcb8;
  border-radius: 2px;
`;

const FieldsBody = styled.div`
  flex: 1;
  margin-top: 5px;
  padding-top: 3px;
  display: flex;
  border-top: 1px solid #e3e1db;
`;

const FieldTree = styled.div`
  flex: 1;
  display: flex;
  flex-direction: column;
  font-size: 9.7px;
  color: #555;
`;

const TableRow = styled.div`
  height: 20px;
  display: flex;
  align-items: center;
  padding-left: 8px;
  color: #4c4c4c;
`;

const TableIconSlot = styled.span`
  position: relative;
  width: 17px;
  display: flex;
  justify-content: center;
`;

const WarnBadge = styled.span`
  position: absolute;
  left: 7px;
  top: 5px;
  width: 9px;
  height: 9px;
  border-radius: 50%;
  display: flex;
  align-items: center;
  justify-content: center;
  background: #e8cd1e;
  color: #333;
`;

const FieldRow = styled.div`
  height: 20px;
  display: flex;
  align-items: center;
`;

const ExpandSlot = styled.span`
  width: 33px;
  display: flex;
  justify-content: flex-end;
  padding-right: 4px;
  color: #666;
`;

const CheckBox = styled.span<{ $checked: boolean }>`
  width: 10px;
  height: 10px;
  display: flex;
  align-items: center;
  justify-content: center;
  background: ${p => (p.$checked ? '#e8cd1e' : 'transparent')};
  border: 1px solid ${p => (p.$checked ? '#e8cd1e' : '#bdbdb9')};
  border-radius: 2px;
  color: #6a5f10;
`;

const KindSlot = styled.span`
  width: 18px;
  display: flex;
  justify-content: center;
  color: #555;
`;

const FieldsScroll = styled.div`
  width: 7px;
  margin: 9px 3px 0 0;
  background: #c9c8c4;
`;

const StatusBar = styled.div`
  height: 21px;
  flex: none;
  display: flex;
  align-items: center;
  padding-left: 4px;
  font-size: 9.5px;
  color: #555;
`;

const PlayerLine = styled.div`
  position: relative;
  height: 2px;
  flex: none;
  background: #0c0c0c;
`;

const PlayerMark = styled.span<{ $w: number; $left: number }>`
  position: absolute;
  top: 0;
  left: ${p => p.$left}px;
  width: ${p => p.$w}px;
  height: 2px;
  background: #6a6a5e;
`;

const BrandBar = styled.div`
  flex: 1;
  display: flex;
  align-items: center;
  padding-left: 18px;
  background: #2f83b6;
  color: #f4f6f6;
`;

const SiteClip = styled.div`
  width: 310px;
  overflow: hidden;
`;

const SiteUrl = styled.div`
  margin-left: -7px;
  font: bold 23px "Liberation Serif", serif;
  letter-spacing: 5.5px;
  white-space: nowrap;
`;

const BrandLogo = styled.div`
  position: relative;
  margin-left: 716px;
  width: 30px;
  font: italic bold 31px/31px "Liberation Serif", serif;
  color: #7a1020;

  &::before {
    content: '';
    position: absolute;
    left: -1px;
    top: 3px;
    width: 22px;
    height: 3px;
    background: #7a1020;
    transform: skewX(-20deg);
  }
`;

const BrandName = styled.div`
  font: bold 21.5px "Liberation Serif", serif;
`;

export default App;
